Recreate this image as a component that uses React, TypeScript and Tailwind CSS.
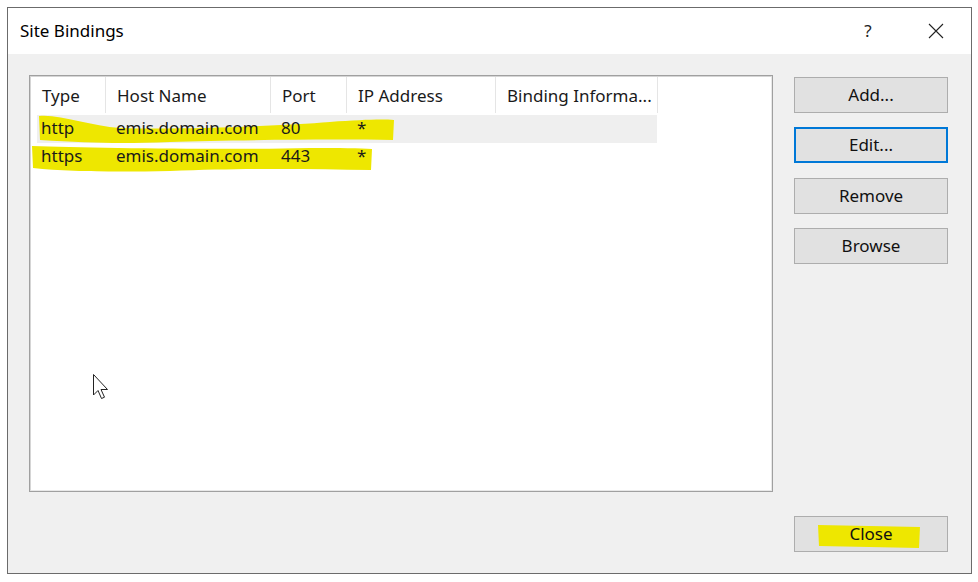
import React from 'react';

const columns = [
  { label: 'Type', w: 'w-[75px]' },
  { label: 'Host Name', w: 'w-[165px]' },
  { label: 'Port', w: 'w-[76px]' },
  { label: 'IP Address', w: 'w-[149px]' },
  { label: 'Binding Informa...', w: 'w-[162px]' },
];

const rows = [
  { type: 'http', host: 'emis.domain.com', port: '80', ip: '*', info: '' },
  { type: 'https', host: 'emis.domain.com', port: '443', ip: '*', info: '' },
];

function DlgButton({ label, focused }: { label: string; focused?: boolean }) {
  return (
    <button
      className={
        'w-[154px] h-[36px] bg-[#e1e1e1] text-[17px] text-[#111] ' +
        (focused ? 'border-2 border-[#0078d7]' : 'border border-[#adadad]')
      }
    >
      {label}
    </button>
  );
}

export default function App() {
  return (
    <div className="w-[978px] h-[582px] bg-white pt-[7px] pl-[7px]" style={{ fontFamily: '"Noto Sans", "Open Sans", sans-serif' }}>
      <div className="w-[965px] h-[567px] border border-[#6b6b6b] flex flex-col bg-[#f0f0f0]">
        {/* title bar */}
        <div className="h-[46px] bg-white flex items-center pl-[12px] text-[17px] text-black">
          <span className="flex-1">Site Bindings</span>
          <span className="w-[20px] text-center text-[17px] mr-[50px] text-[#222]">?</span>
          <svg width="16" height="16" viewBox="0 0 16 16" className="mr-[27px]">
            <path d="M1 1 L15 15 M15 1 L1 15" stroke="#222" strokeWidth="1.1" />
          </svg>
        </div>

        {/* body */}
        <div className="flex-1 flex pl-[21px] pt-[21px] gap-[21px]">
          <div className="w-[744px] h-[417px] border border-[#a0a0a0] bg-white relative">
            <div className="w-full h-full border border-[#d5d5d5] border-r-[#e8e8e8] border-b-[#e8e8e8]">
              {/* hovered row background */}
              <div className="absolute left-[7px] top-[39px] w-[620px] h-[28px] bg-[#efefef]" />
              {/* highlighter strokes */}
              <svg className="absolute left-0 top-0" width="744" height="417">
                <path d="M9 40 C 30 38, 60 50, 90 52 C 150 54, 250 50, 300 46 C 330 44, 350 43, 364 44 L 363 64 C 300 63, 200 64, 140 66 C 90 68, 60 67, 10 64 Z" fill="#eee700" />
                <path d="M2 70 C 60 72, 200 74, 280 72 C 310 72, 330 72, 342 73 L 341 94 C 280 93, 220 92, 140 95 C 90 96, 40 96, 3 92 Z" fill="#eee700" />
              </svg>

              <div className="relative flex h-[36px] text-[17px] text-[#1a1a1a]">
                {columns.map((c) => (
                  <div key={c.label} className={c.w + ' border-r border-[#e5e5e5] pl-[11px] pt-[6px] whitespace-nowrap overflow-hidden'}>
                    {c.label}
                  </div>
                ))}
              </div>
              <div className="h-[2px]" />
              {rows.map((r) => (
                <div key={r.type} className="relative flex h-[28px] text-[17px] leading-[26px] text-[#1a1a1a] w-[620px] ml-[6px]">
                  <div className="w-[69px] pl-[4px]">{r.type}</div>
                  <div className="w-[165px] pl-[10px]">{r.host}</div>
                  <div className="w-[76px] pl-[10px]">{r.port}</div>
                  <div className="w-[149px] pl-[10px]">{r.ip}</div>
                  <div className="w-[161px]">{r.info}</div>
                </div>
              ))}

              {/* mouse cursor */}
              <svg className="absolute left-[63px] top-[298px]" width="18" height="26" viewBox="0 0 18 26">
                <path d="M0.5 0.5 L0.5 21 L5 16.5 L8.5 24.5 L11.5 23.2 L8 15.5 L14.5 15.5 Z" fill="white" stroke="#222" strokeWidth="1" strokeLinejoin="miter" />
              </svg>
            </div>
          </div>

          <div className="flex flex-col pt-[2px]">
            <DlgButton label="Add..." />
            <div className="mt-[14px]">
              <DlgButton label="Edit..." focused />
            </div>
            <div className="mt-[15px]">
              <DlgButton label="Remove" />
            </div>
            <div className="mt-[14px]">
              <DlgButton label="Browse" />
            </div>
            <div className="mt-[252px] relative">
              <div className="relative w-[154px] h-[36px] bg-[#e1e1e1] border border-[#adadad]">
                <svg className="absolute left-[22px] top-[6px]" width="104" height="26">
                  <path d="M1 2 L103 4 L102 25 L2 23 Z" fill="#eee700" />
                </svg>
                <button className="relative w-full h-full text-[17px] text-[#111]">Close</button>
              </div>
            </div>
          </div>
        </div>
      </div>
    </div>
  );
}
